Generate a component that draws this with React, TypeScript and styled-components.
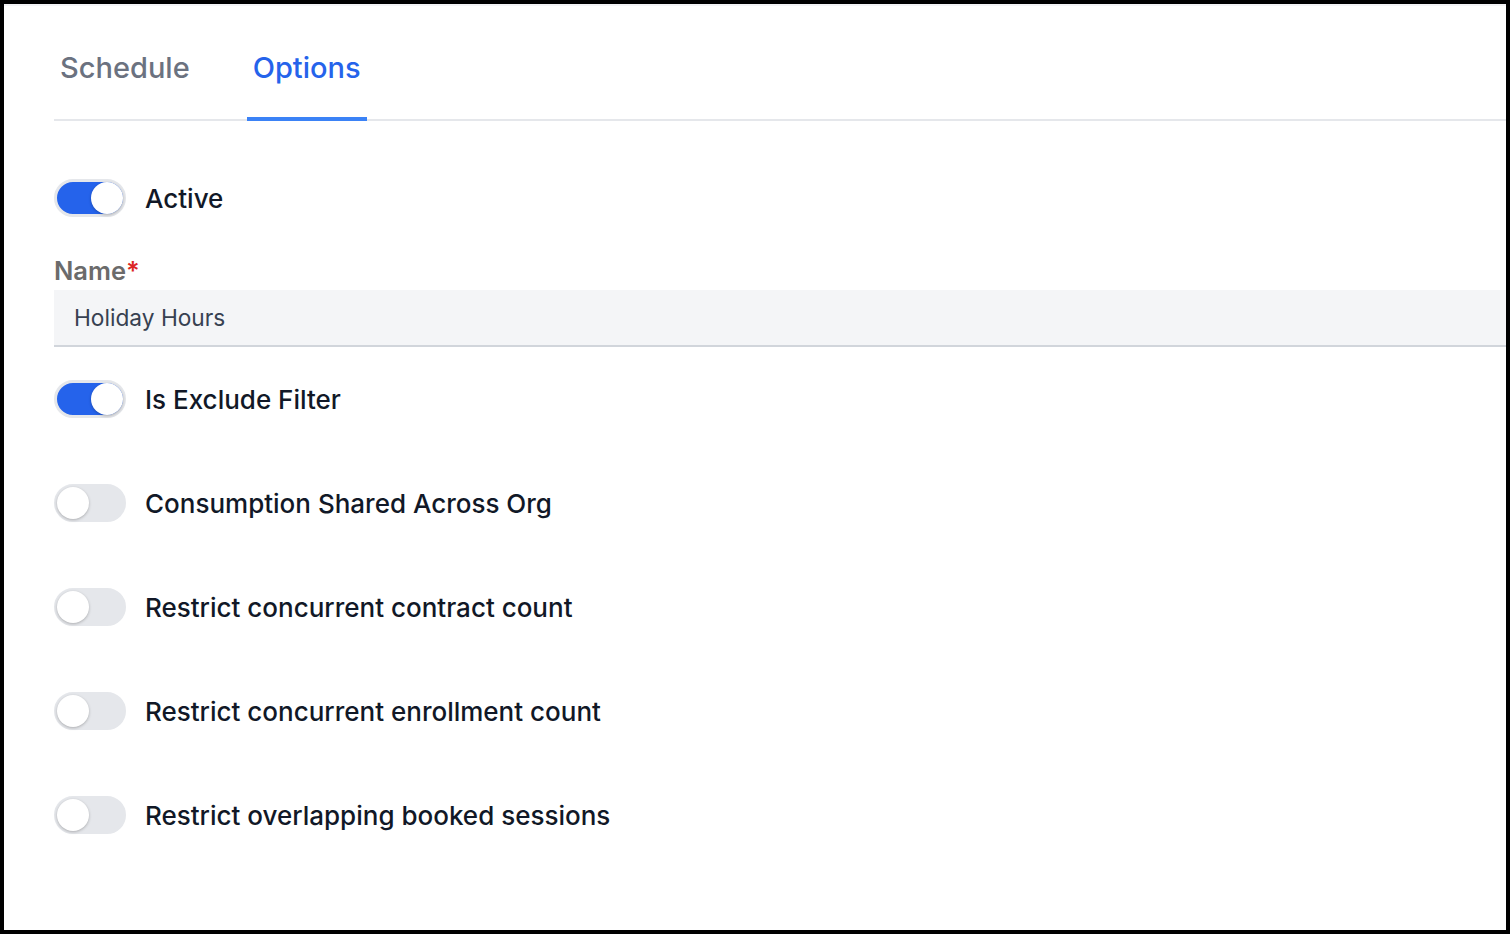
import { useState } from 'react';
import styled, { createGlobalStyle } from 'styled-components';

const GlobalStyle = createGlobalStyle`
  html, body {
    margin: 0;
    padding: 0;
    background: #000000;
  }
  body {
    font-family: Inter, "Noto Sans", "Liberation Sans", sans-serif;
    -webkit-font-smoothing: antialiased;
  }
`;

const Frame = styled.div`
  box-sizing: border-box;
  width: 1510px;
  height: 934px;
  border: 4px solid #000000;
  background: #ffffff;
  overflow: hidden;
`;

const Panel = styled.div`
  box-sizing: border-box;
  height: 100%;
  border-top: 2px solid #f3f4f6;
  padding-left: 50px;
`;

const TabList = styled.div`
  display: flex;
  gap: 51px;
  border-bottom: 2px solid #e5e7eb;
`;

const Tab = styled.button<{ $active: boolean }>`
  appearance: none;
  background: none;
  border: none;
  border-bottom: 4px solid ${(p) => (p.$active ? '#3b82f6' : 'transparent')};
  margin-bottom: -2px;
  padding: 44px 6px 31px;
  font-family: inherit;
  font-size: 29px;
  line-height: 36px;
  font-weight: 500;
  color: ${(p) => (p.$active ? '#2563eb' : '#6b7280')};
  cursor: pointer;
`;

const Form = styled.div`
  display: flex;
  flex-direction: column;
  padding-top: 58px;
`;

const ToggleRow = styled.label`
  display: flex;
  align-items: center;
  gap: 19px;
  height: 38px;
  cursor: pointer;
`;

const Track = styled.span<{ $on: boolean }>`
  box-sizing: border-box;
  display: flex;
  justify-content: ${(p) => (p.$on ? 'flex-end' : 'flex-start')};
  align-items: center;
  width: 72px;
  height: 38px;
  flex-shrink: 0;
  border-radius: 19px;
  border: 3px solid #e5e7eb;
  background: ${(p) => (p.$on ? '#2563eb' : '#e5e7eb')};
`;

const Knob = styled.span`
  width: 32px;
  height: 32px;
  border-radius: 50%;
  background: #ffffff;
  box-shadow: 0 1px 3px rgba(0, 0, 0, 0.25);
`;

const ToggleText = styled.span`
  font-size: 26px;
  font-weight: 500;
  color: #111827;
`;

const Field = styled.div`
  display: flex;
  flex-direction: column;
  gap: 4px;
  margin-top: 39px;
`;

const FieldLabel = styled.div`
  font-size: 25.5px;
  line-height: 30px;
  font-weight: 600;
  color: #6b6b6b;
`;

const Required = styled.span`
  color: #dc2626;
`;

const TextInput = styled.input`
  box-sizing: border-box;
  width: 100%;
  height: 57px;
  border: none;
  border-bottom: 2px solid #d1d5db;
  background: #f4f5f7;
  padding: 0 20px;
  font-family: inherit;
  font-size: 22.7px;
  color: #374151;
  outline: none;
`;

const ToggleList = styled.div`
  display: flex;
  flex-direction: column;
  gap: 66px;
  margin-top: 33px;
`;

interface ToggleProps {
  label: string;
  on: boolean;
  onToggle: () => void;
}

const Toggle = ({ label, on, onToggle }: ToggleProps) => (
  <ToggleRow onClick={onToggle}>
    <Track $on={on}>
      <Knob />
    </Track>
    <ToggleText>{label}</ToggleText>
  </ToggleRow>
);

const App = () => {
  const [tab, setTab] = useState<string>('Options');
  const [name, setName] = useState<string>('Holiday Hours');
  const [flags, setFlags] = useState<Record<string, boolean>>({
    active: true,
    exclude: true,
    shared: false,
    contract: false,
    enrollment: false,
    overlapping: false,
  });

  const flip = (key: string) => setFlags({ ...flags, [key]: !flags[key] });

  const options = [
    { key: 'exclude', label: 'Is Exclude Filter' },
    { key: 'shared', label: 'Consumption Shared Across Org' },
    { key: 'contract', label: 'Restrict concurrent contract count' },
    { key: 'enrollment', label: 'Restrict concurrent enrollment count' },
    { key: 'overlapping', label: 'Restrict overlapping booked sessions' },
  ];

  return (
    <>
      <GlobalStyle />
      <Frame>
        <Panel>
          <TabList>
            {['Schedule', 'Options'].map((t) => (
              <Tab key={t} $active={tab === t} onClick={() => setTab(t)}>
                {t}
              </Tab>
            ))}
          </TabList>
          <Form>
            <Toggle label="Active" on={flags.active} onToggle={() => flip('active')} />
            <Field>
              <FieldLabel>
                Name<Required>*</Required>
              </FieldLabel>
              <TextInput value={name} onChange={(e) => setName(e.target.value)} />
            </Field>
            <ToggleList>
              {options.map((o) => (
                <Toggle
                  key={o.key}
                  label={o.label}
                  on={flags[o.key]}
                  onToggle={() => flip(o.key)}
                />
              ))}
            </ToggleList>
          </Form>
        </Panel>
      </Frame>
    </>
  );
};

export default App;
